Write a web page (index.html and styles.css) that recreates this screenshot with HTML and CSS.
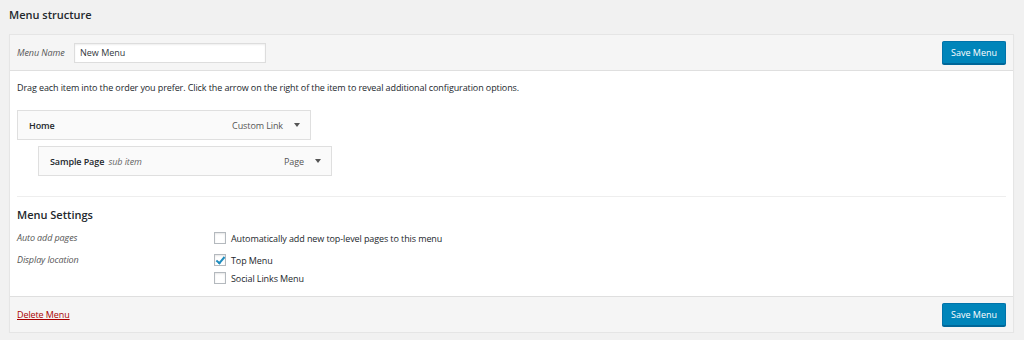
FILE: index.html
```html
<!DOCTYPE html>
<html lang="en">
<head>
  <meta charset="UTF-8">
  <title>Menu structure</title>
  <link rel="stylesheet" href="styles.css">
</head>
<body>
  <h2 class="page-title">Menu structure</h2>

  <div class="menu-panel">
    <div class="panel-header">
      <label class="name-field">
        <span class="field-label">Menu Name</span>
        <input type="text" class="name-input" value="New Menu">
      </label>
      <button class="save-btn">Save Menu</button>
    </div>

    <div class="panel-body">
      <p class="drag-hint">Drag each item into the order you prefer. Click the arrow on the right of the item to reveal additional configuration options.</p>

      <ul class="menu-items">
        <li class="menu-item">
          <span class="item-title">Home</span>
          <span class="item-type">Custom Link</span>
          <span class="item-arrow"></span>
        </li>
        <li class="menu-item depth-1">
          <span class="item-title">Sample Page <em class="sub-note">sub item</em></span>
          <span class="item-type">Page</span>
          <span class="item-arrow"></span>
        </li>
      </ul>

      <div class="menu-settings">
        <h3 class="settings-title">Menu Settings</h3>
        <div class="settings-row">
          <span class="settings-label">Auto add pages</span>
          <div class="settings-options">
            <label class="check"><span class="box"></span>Automatically add new top-level pages to this menu</label>
          </div>
        </div>
        <div class="settings-row">
          <span class="settings-label">Display location</span>
          <div class="settings-options">
            <label class="check"><span class="box checked"></span>Top Menu</label>
            <label class="check"><span class="box"></span>Social Links Menu</label>
          </div>
        </div>
      </div>
    </div>

    <div class="panel-footer">
      <a href="#" class="delete-link">Delete Menu</a>
      <button class="save-btn">Save Menu</button>
    </div>
  </div>
</body>
</html>
```

FILE: styles.css
```css
body {
  margin: 0;
  padding: 0 10px 0 9px;
  background-color: #f1f1f1;
  font-family: "Open Sans", "Noto Sans", sans-serif;
  font-size: 9px;
  letter-spacing: -0.1px;
  color: #23282d;
}
.page-title {
  margin: 0;
  height: 34px;
  line-height: 30px;
  font-size: 11px;
  font-weight: 600;
  letter-spacing: 0;
  color: #23282d;
}
.menu-panel {
  width: 1003px;
  background: #fff;
  border: 1px solid #e5e5e5;
  box-shadow: 0 1px 1px rgba(0,0,0,0.04);
}
.panel-header,
.panel-footer {
  display: flex;
  align-items: center;
  justify-content: space-between;
  height: 35px;
  padding: 0 7px;
  background: #f5f5f5;
}
.panel-header {
  border-bottom: 1px solid #dfdfdf;
}
.panel-footer {
  border-top: 1px solid #dfdfdf;
}
.name-field {
  display: flex;
  align-items: center;
}
.field-label {
  font-style: italic;
  color: #555;
  width: 57px;
}
.name-input {
  width: 192px;
  height: 20px;
  box-sizing: border-box;
  border: 1px solid #ddd;
  padding: 0 5px;
  font: inherit;
  color: #32373c;
  box-shadow: inset 0 1px 2px rgba(0,0,0,0.07);
}
.save-btn {
  width: 64px;
  height: 23px;
  padding: 0;
  background: #0085ba;
  border: 1px solid #0073aa;
  border-bottom-color: #006799;
  border-radius: 2px;
  box-shadow: 0 1px 0 #006799;
  color: #fff;
  font: inherit;
  cursor: pointer;
}
.panel-body {
  padding: 0 7px;
}
.drag-hint {
  margin: 0;
  padding: 11px 0 0;
  height: 28px;
  line-height: 12px;
  color: #23282d;
}
.menu-items {
  list-style: none;
  margin: 0;
  padding: 0;
}
.menu-item {
  display: flex;
  align-items: center;
  width: 294px;
  height: 30px;
  box-sizing: border-box;
  padding: 0 10px 0 11px;
  margin-bottom: 6px;
  background: #fafafa;
  border: 1px solid #dfdfdf;
}
.menu-item.depth-1 {
  margin-left: 21px;
}
.item-title {
  flex: 1;
  font-weight: 600;
  color: #23282d;
}
.sub-note {
  font-weight: 400;
  color: #666;
  margin-left: 2px;
}
.item-type {
  color: #555;
  margin-right: 11px;
}
.item-arrow {
  width: 0;
  height: 0;
  border-left: 3px solid transparent;
  border-right: 3px solid transparent;
  border-top: 4px solid #555;
}
.menu-settings {
  margin-top: 20px;
  border-top: 1px solid #eee;
  padding-bottom: 5px;
}
.settings-title {
  margin: 0;
  padding-top: 10px;
  height: 22px;
  line-height: 16px;
  font-size: 11px;
  font-weight: 600;
  letter-spacing: 0;
}
.settings-row {
  display: flex;
  margin-bottom: 4px;
}
.settings-label {
  width: 197px;
  font-style: italic;
  color: #555;
  line-height: 18px;
}
.settings-options {
  display: flex;
  flex-direction: column;
}
.check {
  display: flex;
  align-items: center;
  height: 18px;
  color: #23282d;
}
.box {
  position: relative;
  width: 12px;
  height: 12px;
  box-sizing: border-box;
  margin-right: 5px;
  border: 1px solid #b4b9be;
  background: #fff;
  box-shadow: inset 0 1px 2px rgba(0,0,0,0.1);
}
.box.checked::after {
  content: "";
  position: absolute;
  left: 3px;
  top: 0;
  width: 3px;
  height: 7px;
  border-right: 2px solid #1e8cbe;
  border-bottom: 2px solid #1e8cbe;
  transform: rotate(40deg);
}
.delete-link {
  color: #a00;
  text-decoration: underline;
}
```
